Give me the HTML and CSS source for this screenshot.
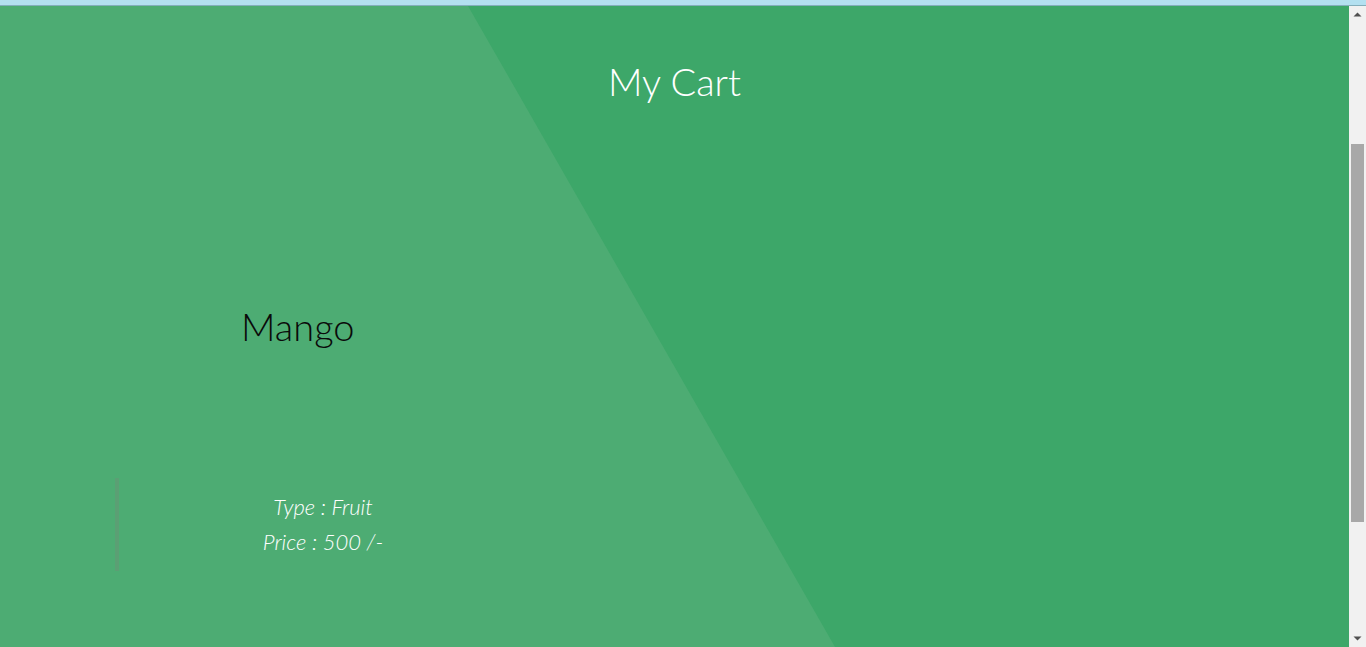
FILE: index.html
```html
<!DOCTYPE html>
<html lang="en">
<head>
<meta charset="utf-8">
<title>My Cart</title>
<link rel="stylesheet" href="styles.css">
</head>
<body>
<div class="topbar"></div>
<div class="frame">
  <main class="main">
    <h1 class="title">My Cart</h1>
    <section class="item">
      <h2 class="item-name">Mango</h2>
      <blockquote class="item-info">
        <p>Type : Fruit</p>
        <p>Price : 500 /-</p>
      </blockquote>
    </section>
  </main>
  <div class="scrollbar">
    <div class="sb-btn"><svg width="17" height="17" viewBox="0 0 17 17"><path d="M4.5 10.5h8L8.5 6.5z" fill="#505050"/></svg></div>
    <div class="sb-track"><div class="sb-thumb"></div></div>
    <div class="sb-btn"><svg width="17" height="17" viewBox="0 0 17 17"><path d="M4.5 6.5h8L8.5 10.5z" fill="#505050"/></svg></div>
  </div>
</div>
</body>
</html>
```
FILE: styles.css
```css
html, body {
  margin: 0;
  padding: 0;
  height: 647px;
  overflow: hidden;
}
body {
  font-family: Lato, "Open Sans", sans-serif;
  font-weight: 300;
  background: #3ca669;
}
.topbar {
  height: 5px;
  background: #b3e0f0;
  border-bottom: 1px solid #83aebb;
}
.frame {
  display: flex;
  height: 641px;
}
.main {
  flex: 1;
  position: relative;
  background: #3da769;
  overflow: hidden;
}
.main::before {
  content: "";
  position: absolute;
  inset: 0;
  background: #4dac73;
  clip-path: polygon(0 0, 468px 0, 835px 641px, 0 641px);
}
.title {
  position: relative;
  margin: 53px 0 0;
  font-size: 38px;
  line-height: 44px;
  font-weight: 300;
  color: #fff;
  text-align: center;
}
.item {
  position: relative;
  margin: 199px 0 0 115px;
  width: 412px;
}
.item-name {
  margin: 0;
  padding-left: 126px;
  font-size: 38px;
  line-height: 48px;
  font-weight: 300;
  color: #0a0a0a;
}
.item-info {
  margin: 128px 0 0;
  padding: 11px 0 12px;
  border-left: 4px solid #5b9f74;
  text-align: center;
  font-style: italic;
  font-size: 22px;
  line-height: 35px;
  color: #fff;
}
.item-info p {
  margin: 0;
}
.scrollbar {
  width: 17px;
  background: #f1f1f1;
  display: flex;
  flex-direction: column;
}
.sb-btn {
  height: 17px;
  display: flex;
}
.sb-track {
  flex: 1;
  display: flex;
  flex-direction: column;
  padding: 121px 2px 0;
}
.sb-thumb {
  height: 378px;
  background: #a8a8a8;
}
```
